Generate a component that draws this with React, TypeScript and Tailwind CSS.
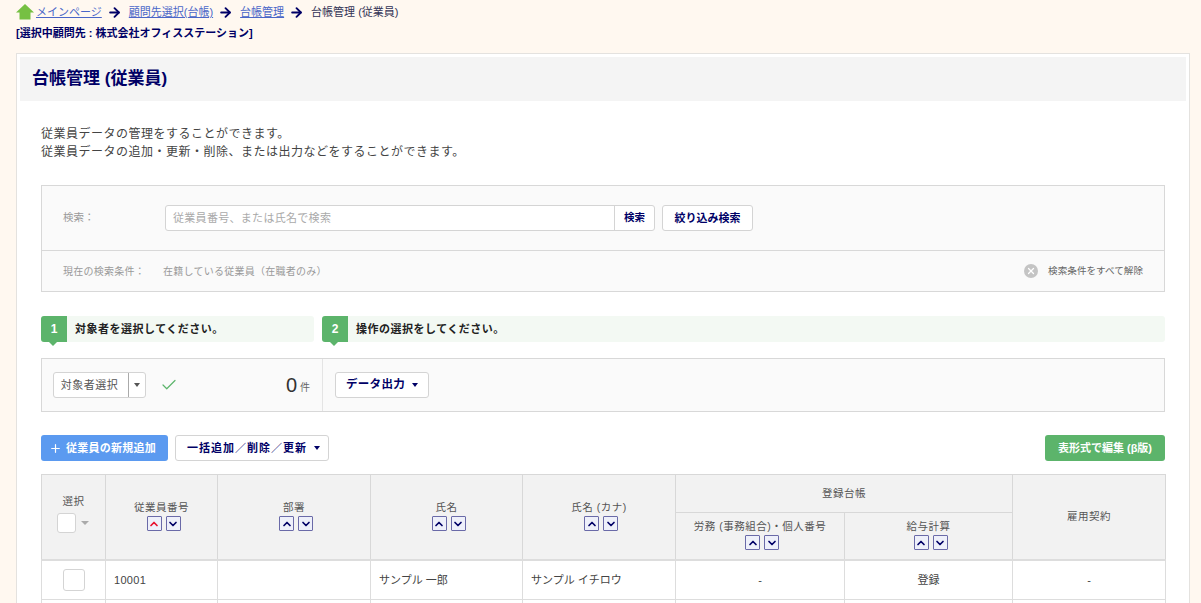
import { ArrowRight, Check, ChevronDown, ChevronUp, Plus, X } from "lucide-react";

const FONT = "font-['Liberation_Sans','Noto_Sans_CJK_JP',sans-serif]";

function Caret({ className = "border-t-[#000066]" }: { className?: string }) {
    return <span className={`inline-block w-0 h-0 border-x-[3.5px] border-x-transparent border-t-[4px] ${className}`} />;
}

function SortButtons({ active = false }: { active?: boolean }) {
    return (
        <div className="flex justify-center gap-[4px] pl-[4px]">
            <span className="w-[15px] h-[15px] flex items-center justify-center border border-[#6a6aa8] bg-[#eef0fa] rounded-[1px]">
                <ChevronUp size={12} strokeWidth={3.4} className={active ? "text-[#e8112d]" : "text-[#000066]"} />
            </span>
            <span className="w-[15px] h-[15px] flex items-center justify-center border border-[#6a6aa8] bg-[#eef0fa] rounded-[1px]">
                <ChevronDown size={12} strokeWidth={3.4} className="text-[#000066]" />
            </span>
        </div>
    );
}

function HeadLabel({ label, active }: { label: string; active?: boolean }) {
    return (
        <div className="flex flex-col items-center gap-[1px] pb-[3px]">
            <span className="leading-[16px]">{label}</span>
            <SortButtons active={active} />
        </div>
    );
}

function Step({ num, text, className }: { num: string; text: string; className: string }) {
    return (
        <div className={`relative flex items-center h-[26px] bg-[#f3f9f3] rounded-[3px] ${className}`}>
            <span className="relative w-[26px] h-[26px] flex items-center justify-center bg-[#5cb46b] text-white text-[12px] font-bold rounded-l-[3px]">
                {num}
                <span className="absolute left-[8px] top-[26px] w-0 h-0 border-x-[4px] border-x-transparent border-t-[4px] border-t-[#5cb46b]" />
            </span>
            <span className="ml-[8px] text-[11px] tracking-[0.5px] font-bold text-[#222222]">{text}</span>
        </div>
    );
}

const th = "border border-[#d8d8d8] font-normal align-middle p-0 text-[10.5px] tracking-[0.5px] text-[#555555]";
const td = "border border-[#dddddd] align-middle text-[11px] text-[#444444]";

export default function App() {
    return (
        <div className={`h-[603px] overflow-hidden bg-[#fff8f0] ${FONT}`}>
            <div className="flex items-center h-[25px] pl-[16px] text-[11px] text-[#333355]">
                <svg width="18" height="16" viewBox="0 0 18 16" className="mt-[-1px]">
                    <path d="M9 0 L18 8.5 L14.5 8.5 L14.5 15.5 L3.5 15.5 L3.5 8.5 L0 8.5 Z" fill="#76c043" />
                </svg>
                <a className="ml-[2px] text-[#4a66c8] underline">メインページ</a>
                <ArrowRight size={15} strokeWidth={3} className="ml-[5px] mr-[7px] text-[#000066]" />
                <a className="text-[#4a66c8] underline">顧問先選択(台帳)</a>
                <ArrowRight size={15} strokeWidth={3} className="ml-[5px] mr-[7px] text-[#000066]" />
                <a className="text-[#4a66c8] underline">台帳管理</a>
                <ArrowRight size={15} strokeWidth={3} className="ml-[5px] mr-[7px] text-[#000066]" />
                <span>台帳管理 (従業員)</span>
            </div>
            <div className="pl-[16px] h-[16px] leading-[16px] text-[11px] font-bold text-[#000066]">
                [選択中顧問先 : 株式会社オフィスステーション]
            </div>

            <div className="mx-[16px] mt-[12px] border border-[#e4e2df] bg-white p-[3px] w-[1174px]">
                <div className="h-[44px] bg-[#f4f4f4] flex items-center pl-[12px] text-[17px] font-bold text-[#000066]">
                    台帳管理 (従業員)
                </div>

                <div className="px-[21px]">
                    <div className="mt-[24px] text-[12px] tracking-[0.5px] leading-[18px] text-[#444444]">
                        <p>従業員データの管理をすることができます。</p>
                        <p>従業員データの追加・更新・削除、または出力などをすることができます。</p>
                    </div>

                    <div className="mt-[24px] border border-[#d8d8d8] bg-[#fafafa]">
                        <div className="h-[65px] flex items-center border-b border-[#d8d8d8] pl-[21px]">
                            <span className="w-[102px] text-[10.5px] text-[#999999]">検索：</span>
                            <div className="flex h-[26px] w-[490px] border border-[#d4d4d4] rounded-[3px] bg-white">
                                <span className="flex-1 flex items-center pl-[7px] text-[11px] tracking-[0.3px] text-[#aaaaaa] border-r border-[#d4d4d4]">
                                    従業員番号、または氏名で検索
                                </span>
                                <span className="w-[39px] flex items-center justify-center text-[10.5px] font-bold text-[#000066]">検索</span>
                            </div>
                            <button className="ml-[7px] h-[26px] w-[91px] border border-[#d4d4d4] rounded-[3px] bg-white text-[11px] font-bold text-[#000066]">
                                絞り込み検索
                            </button>
                        </div>
                        <div className="h-[40px] flex items-center pl-[21px] pr-[21px] text-[10px] tracking-[0.25px] text-[#999999]">
                            <span className="w-[100px]">現在の検索条件：</span>
                            <span>在籍している従業員（在職者のみ）</span>
                            <span className="ml-auto flex items-center tracking-[0px] text-[9.6px] text-[#666666]">
                                <span className="w-[14px] h-[14px] rounded-full bg-[#c4c4c4] flex items-center justify-center mr-[10px]">
                                    <X size={10} strokeWidth={3} className="text-white" />
                                </span>
                                検索条件をすべて解除
                            </span>
                        </div>
                    </div>

                    <div className="mt-[24px] flex gap-[8px]">
                        <Step num="1" text="対象者を選択してください。" className="w-[273px]" />
                        <Step num="2" text="操作の選択をしてください。" className="flex-1" />
                    </div>

                    <div className="mt-[16px] h-[54px] flex border border-[#d8d8d8] bg-[#fafafa]">
                        <div className="w-[281px] flex items-center pl-[11px] pr-[11px] border-r border-[#e4e4e4]">
                            <div className="flex h-[26px] border border-[#d4d4d4] rounded-[3px] bg-white">
                                <span className="w-[75px] flex items-center justify-center pr-[3px] text-[11px] tracking-[0.5px] text-[#555555] border-r border-[#aaaaaa]">対象者選択</span>
                                <span className="w-[16px] flex items-center justify-center"><Caret className="border-t-[#555555]" /></span>
                            </div>
                            <Check size={18} strokeWidth={1.6} className="ml-[14px] text-[#5cb46b]" />
                            <span className="ml-auto text-[20px] text-[#333333]">0</span>
                            <span className="ml-[3px] mt-[5px] mr-[1px] text-[10px] text-[#666666]">件</span>
                        </div>
                        <div className="flex items-center pl-[12px]">
                            <button className="h-[26px] w-[94px] flex items-center justify-center gap-[7px] border border-[#d4d4d4] rounded-[3px] bg-white text-[11.5px] tracking-[0.3px] font-bold text-[#000066]">
                                データ出力 <Caret />
                            </button>
                        </div>
                    </div>

                    <div className="mt-[23px] flex items-center">
                        <button className="h-[26px] w-[127px] flex items-center justify-center pr-[4px] bg-[#5b9af0] rounded-[3px] text-[11px] tracking-[0.25px] font-bold text-white">
                            <Plus size={13} strokeWidth={2.2} className="mr-[4px]" />従業員の新規追加
                        </button>
                        <button className="ml-[7px] h-[26px] w-[154px] flex items-center justify-center gap-[7px] pl-[3px] border border-[#d4d4d4] rounded-[3px] bg-white text-[11px] tracking-[1px] font-bold text-[#000066]">
                            一括追加／削除／更新 <Caret />
                        </button>
                        <button className="ml-auto h-[26px] w-[120px] bg-[#5cb46b] rounded-[3px] text-[11px] font-bold text-white">
                            表形式で編集 (β版)
                        </button>
                    </div>

                    <table className="mt-[13px] w-[1124px] table-fixed border-collapse">
                        <colgroup>
                            <col className="w-[64px]" />
                            <col className="w-[112px]" />
                            <col className="w-[153px]" />
                            <col className="w-[152px]" />
                            <col className="w-[153px]" />
                            <col className="w-[169px]" />
                            <col className="w-[168px]" />
                            <col className="w-[153px]" />
                        </colgroup>
                        <thead className="bg-[#f2f2f2] text-center">
                            <tr className="h-[38px]">
                                <th rowSpan={2} className={th}>
                                    <div className="leading-[16px]">選択</div>
                                    <div className="flex items-center justify-center gap-[5px] mt-[4px] pb-[8px] pr-[2px]">
                                        <span className="w-[19px] h-[20px] bg-white border border-[#d4d4d4] rounded-[3px]" />
                                        <span className="w-0 h-0 border-x-[4px] border-x-transparent border-t-[4px] border-t-[#aaaaaa]" />
                                    </div>
                                </th>
                                <th rowSpan={2} className={th}><HeadLabel label="従業員番号" active /></th>
                                <th rowSpan={2} className={th}><HeadLabel label="部署" /></th>
                                <th rowSpan={2} className={th}><HeadLabel label="氏名" /></th>
                                <th rowSpan={2} className={th}><HeadLabel label="氏名 (カナ)" /></th>
                                <th colSpan={2} className={th}>登録台帳</th>
                                <th rowSpan={2} className={th}>雇用契約</th>
                            </tr>
                            <tr className="h-[47px]">
                                <th className={th}><HeadLabel label="労務 (事務組合)・個人番号" /></th>
                                <th className={th}><HeadLabel label="給与計算" /></th>
                            </tr>
                        </thead>
                        <tbody>
                            <tr className="h-[40px] border-t-2 border-[#dddddd]">
                                <td className={`${td} text-center`}>
                                    <span className="inline-block align-middle w-[22px] h-[22px] bg-white border border-[#d4d4d4] rounded-[3px]" />
                                </td>
                                <td className={`${td} pl-[8px] text-[10.5px] tracking-[0.3px]`}>10001</td>
                                <td className={td}></td>
                                <td className={`${td} pl-[8px]`}>サンプル 一郎</td>
                                <td className={`${td} pl-[8px]`}>サンプル イチロウ</td>
                                <td className={`${td} text-center`}>-</td>
                                <td className={`${td} text-center`}>登録</td>
                                <td className={`${td} text-center`}>-</td>
                            </tr>
                            <tr className="h-[41px]">
                                <td className={td}></td>
                                <td className={td}></td>
                                <td className={td}></td>
                                <td className={td}></td>
                                <td className={td}></td>
                                <td className={td}></td>
                                <td className={td}></td>
                                <td className={td}></td>
                            </tr>
                        </tbody>
                    </table>
                </div>
            </div>
        </div>
    );
}
